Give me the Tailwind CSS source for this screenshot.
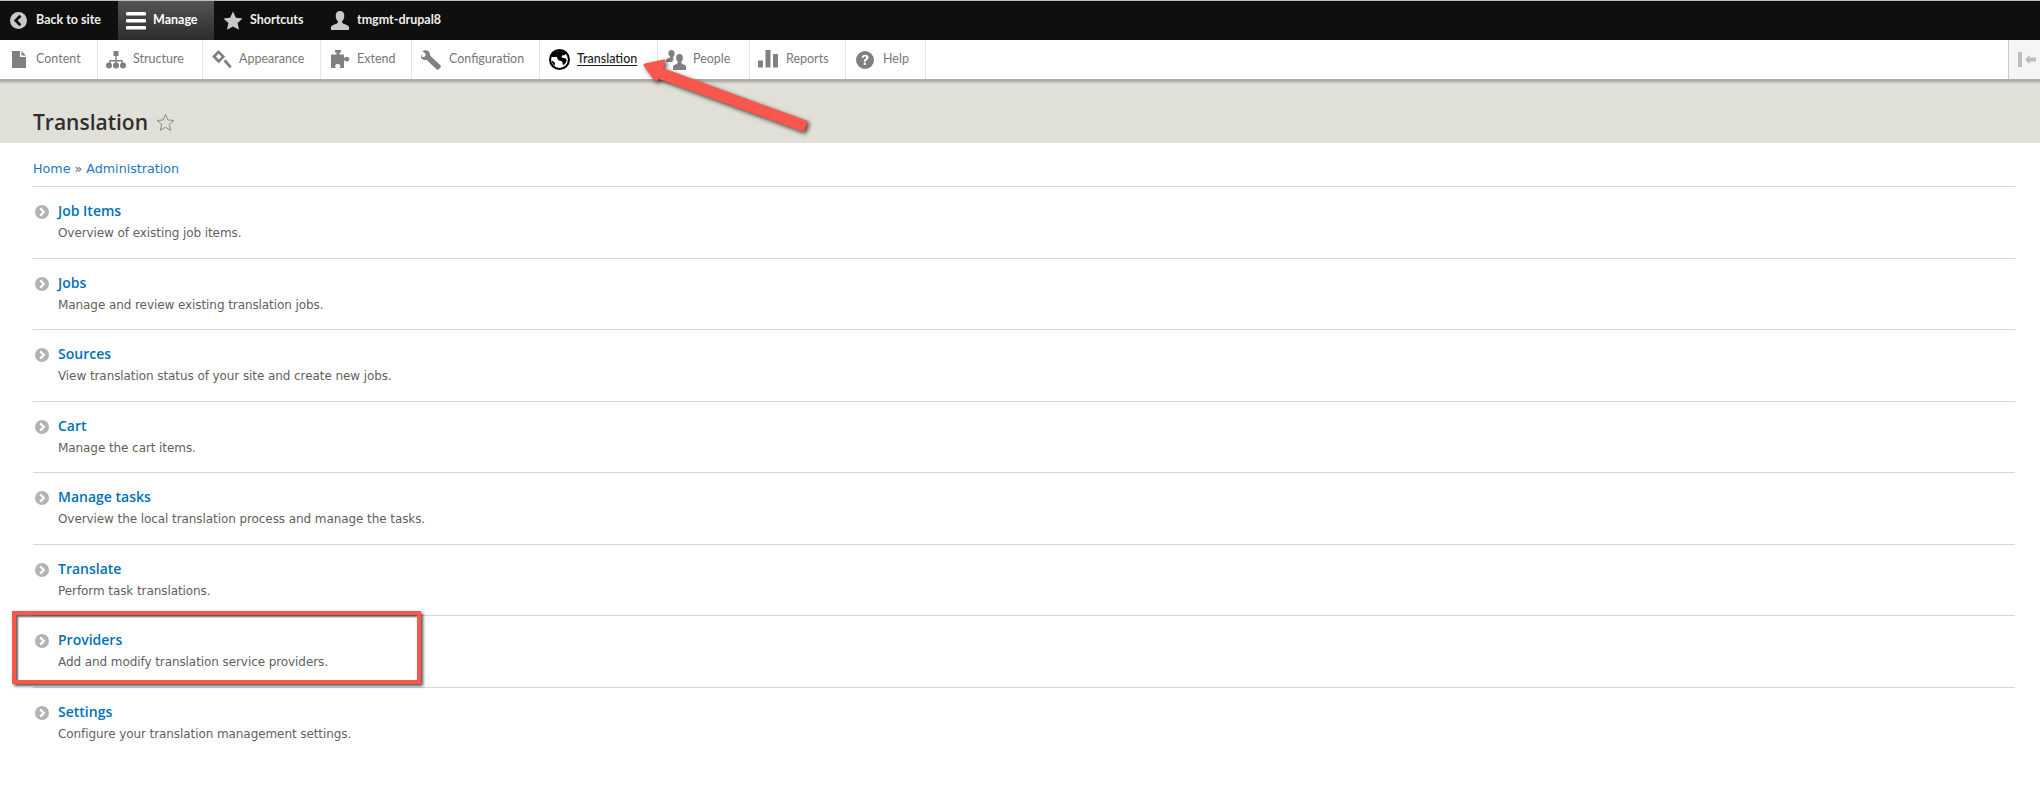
<!DOCTYPE html>
<html lang="en">
<head>
<meta charset="UTF-8">
<title>Translation</title>
<script src="https://cdn.jsdelivr.net/npm/@tailwindcss/browser@4"></script>
</head>
<body class="bg-white h-[786px] w-[2040px] overflow-hidden relative font-['DejaVu_Sans',sans-serif]">

<!-- Black bar -->
<div class="h-10 bg-[#0f0f0f] border-t border-[#bdbdbd] flex text-[12.5px] font-bold text-[#eeeeee] font-['Lato',sans-serif]">
    <a class="w-[118px] flex items-center pl-[10px] gap-[9px]">
        <svg class="w-[17px] h-[17px]" viewBox="0 0 16 16"><circle cx="8" cy="8" r="8" fill="#c9c9c9"/><path d="M9.8 3.6 5.4 8l4.4 4.4" fill="none" stroke="#0f0f0f" stroke-width="2.6"/></svg>
        Back to site
    </a>
    <a class="w-[96px] flex items-center pl-[8px] gap-[7px] bg-gradient-to-b from-[#555555] to-[#2c2c2c] text-white">
        <svg class="w-5 h-5" viewBox="0 0 20 20" fill="#ffffff"><rect y="1" width="20" height="3.6" rx="1"/><rect y="8" width="20" height="3.6" rx="1"/><rect y="15" width="20" height="3.6" rx="1"/></svg>
        Manage
    </a>
    <a class="w-[109px] flex items-center pl-[9px] gap-[7px]">
        <svg class="w-5 h-5" viewBox="0 0 20 20" fill="#c9c9c9"><path d="M10 .5l2.9 6.2 6.7.8-5 4.6 1.4 6.7-6-3.4-6 3.4 1.4-6.7-5-4.6 6.7-.8z"/></svg>
        Shortcuts
    </a>
    <a class="flex items-center pl-[7px] gap-[7px]">
        <svg class="w-5 h-5" viewBox="0 0 20 20" fill="#c9c9c9"><path d="M10 0c2.8 0 4.3 2 4.3 4.8 0 2.4-1 4.3-2.1 5.3-.4 1.4.2 2.4 1.9 3 2.300.8 4.500 1.400 4.900 3.100V19H1v-2.800c.4-1.700 2.600-2.300 4.900-3.100 1.700-.6 2.300-1.600 1.900-3C6.700 9.100 5.700 7.200 5.700 4.800 5.700 2 7.200 0 10 0z"/></svg>
        tmgmt-drupal8
    </a>
</div>

<!-- Tray -->
<nav class="h-[42px] bg-white border-b-[3px] border-[#aeaeaa] flex text-[12.5px] text-[#777777] font-['Lato',sans-serif]">
    <a class="w-[98px] flex items-center border-r border-[#e5e5e5] pl-[12px] gap-[10px]">
        <svg class="w-[14px] h-[17px]" viewBox="0 0 14 17" fill="#808080"><path d="M0 0h8v6h6v11H0zM9.500 0 14 4.500H9.500z"/></svg>
        Content
    </a>
    <a class="w-[105px] flex items-center border-r border-[#e5e5e5] pl-[8px] gap-[7px]">
        <svg class="w-5 h-5" viewBox="0 0 20 20" fill="#808080"><rect x="7.500" y="1" width="5" height="5"/><path d="M9.300 5h1.400v5h6v3h-1.400v-1.600h-4.600V13H9.300v-1.600H4.700V13H3.300v-3h6z"/><circle cx="3" cy="15.500" r="3"/><circle cx="10" cy="15.500" r="3"/><circle cx="17" cy="15.500" r="3"/></svg>
        Structure
    </a>
    <a class="w-[118px] flex items-center border-r border-[#e5e5e5] pl-[9px] gap-[7px]">
        <svg class="w-5 h-5" viewBox="0 0 20 20" fill="#808080"><path d="M0 6.500 6.500 0l6.700 6.700-6.500 6.500zM3.800 6.500l3 3 2.800-2.800-3-3z"/><path d="M11.500 11.500l2.200-2.200 6 7.200-1.800 1.800z"/></svg>
        Appearance
    </a>
    <a class="w-[91px] flex items-center border-r border-[#e5e5e5] pl-[9px] gap-[7px]">
        <svg class="w-5 h-5" viewBox="0 0 20 20" fill="#808080"><path d="M5 0h6v2.500H9.500V4.500H14v3.800c.6-1 2-1.500 3.300-1.300 1.500.3 2 1.300 2 2.200 0 1-.6 2-2 2.200-1.300.2-2.700-.3-3.300-1.300V18H9.500c.8-.8 1-1.800.6-2.700-.5-.9-1.400-1.300-2.400-1.300s-1.900.4-2.300 1.300c-.4.900-.2 1.900.6 2.700H1V4.500h5.500V2.500H5z"/></svg>
        Extend
    </a>
    <a class="w-[128px] flex items-center border-r border-[#e5e5e5] pl-[9px] gap-[8px]">
        <svg class="w-5 h-5" viewBox="0 0 20 20" fill="#808080"><path d="M5.200.3C3.800.1 2.500.4 1.300 1.100l3.500 2.800-.8 2.700-2.700.7L-.1 4c-.5 1.500-.3 3 .6 4.300 1.200 1.600 3.200 2.200 5 1.500l9.700 9.300c.8.800 2 .8 2.800 0l1.300-1.300c.8-.8.7-2-.1-2.800L9 5.600C9.400 3 7.800.7 5.200.3z"/></svg>
        Configuration
    </a>
    <a class="w-[118px] flex items-center border-r border-[#e5e5e5] pl-[9px] gap-[7px] text-[#1a1a1a] font-medium">
        <svg class="w-[21px] h-[21px]" viewBox="0 0 20 20"><circle cx="10" cy="10" r="9" fill="#ffffff" stroke="#000000" stroke-width="2"/><path d="M6 2c2 .4 4 0 6-.6 1.800.4 3.400 1.400 4.400 2.800-1 .6-1.400 2-2.800 1.800-1.200-.2-1.800.8-1.400 1.800.6 1 2.400.6 3.600 1.200 1 .6 1.200 2 .6 3.200-.6 1.400-1.600 2.800-3 3.200-.6-1-.2-2.400-1-3.400-.8-1-2.600-.6-3.600-1.600-1-1-.6-2.400-1.800-3C4.800 7.600 3 7.800 1.800 7.400 2.400 5 4 3 6 2z" fill="#000000"/><path d="M2.500 11c1.200.4 2.200 1.200 3 2.200.4 1-.2 2-.2 3C3.800 15 2.800 13 2.500 11z" fill="#000000"/></svg>
        <span class="underline underline-offset-2">Translation</span>
    </a>
    <a class="w-[92px] flex items-center border-r border-[#e5e5e5] pl-[8px] gap-[7px]">
        <svg class="w-5 h-5" viewBox="0 0 20 20" fill="#808080"><path d="M5.500 0C7.500 0 8.600 1.400 8.600 3.400c0 1.600-.7 3-1.500 3.700-.2 1 0 1.600.8 2.100-1 .6-1.500 1.600-1.600 2.800H0v-2c.3-1.200 1.900-1.600 3.400-2.200.6-.3.800-.8.600-1.600C3.100 5.500 2.400 4.900 2.400 3.400 2.400 1.400 3.500 0 5.500 0z"/><path d="M13.500 4c2.200 0 3.400 1.600 3.400 3.700 0 1.800-.8 3.300-1.600 4-.3 1 .1 1.700 1.200 2.200 1.500.6 3.100 1.100 3.500 2.400V20H7v-3.700c.4-1.300 2-1.800 3.500-2.400 1.100-.5 1.500-1.200 1.200-2.200-.8-.7-1.600-2.200-1.600-4C10.100 5.600 11.300 4 13.500 4z"/></svg>
        People
    </a>
    <a class="w-[96px] flex items-center border-r border-[#e5e5e5] pl-[8px] gap-[8px]">
        <svg class="w-5 h-5" viewBox="0 0 20 20" fill="#808080"><rect y="10.500" width="5" height="7"/><rect x="7.500" y="0" width="5" height="17.500"/><rect x="15" y="4" width="5" height="13.500"/></svg>
        Reports
    </a>
    <a class="w-[80px] flex items-center border-r border-[#e5e5e5] pl-[10px] gap-[9px]">
        <svg class="w-[18px] h-[18px]" viewBox="0 0 18 18"><circle cx="9" cy="9" r="9" fill="#808080"/><path d="M5.700 6.800C5.900 4.800 7.200 3.700 9.200 3.700c2 0 3.300 1.100 3.300 2.700 0 2.400-2.700 2.400-2.700 4.400H7.800c0-3 2.400-3 2.400-4.300 0-.7-.4-1.100-1.100-1.100-.8 0-1.200.5-1.300 1.400z" fill="#ffffff"/><rect x="7.700" y="11.700" width="2.200" height="2.300" fill="#ffffff"/></svg>
        Help
    </a>
    <div class="ml-auto w-[32px] bg-[#f5f5f5] border-l border-[#c9c9c9] flex items-center pl-[9px] gap-[3px]">
        <div class="w-1 h-[15px] bg-[#bdbdbd]"></div>
        <svg class="w-[11px] h-[9px]" viewBox="0 0 11 9" fill="#bdbdbd"><path d="M0 4.500 4.500 0v2.500H11v4H4.500V9z"/></svg>
    </div>
</nav>

<!-- Title -->
<header class="h-[61px] bg-[#e0e0d8] border-t-2 border-[#d2d2ca] pl-[33px] flex items-center gap-[8px] pt-[17px]">
    <h1 class="text-[21px] font-semibold leading-none text-[#2f2f2f] font-['Open_Sans',sans-serif]">Translation</h1>
    <svg class="w-[19px] h-[19px]" viewBox="0 0 20 20" fill="none" stroke="#85857d" stroke-width="1"><path d="M10 1.500l2.500 5.800 6.300.6-4.800 4.200 1.400 6.200-5.400-3.300-5.400 3.300 1.400-6.200L1.200 7.900l6.300-.6z"/></svg>
</header>

<main class="px-[33px] pr-[25px]">
    <div class="h-[43px] flex items-center text-[12.7px] text-[#666666] pt-[9px] font-['DejaVu_Sans',sans-serif]">
        <a class="text-[#1a76c2]">Home</a>
        <span class="mx-[4px]">»</span>
        <a class="text-[#1a76c2]">Administration</a>
    </div>
    <ul>
        <li class="h-[71.5px] border-t border-[#d4d4d4] flex pl-[2px] gap-[8px]">
            <svg class="w-[14px] h-[14px] mt-[18px] shrink-0" viewBox="0 0 14 14"><circle cx="7" cy="7" r="7" fill="#b3b3b3"/><path d="M5.200 3.400 8.800 7l-3.600 3.600" fill="none" stroke="#ffffff" stroke-width="2.200"/></svg>
            <div class="pl-[1px] pt-[13px]"><a class="block text-[14px] leading-[22px] font-semibold font-['Open_Sans',sans-serif] text-[#0071b8]">Job Items</a><p class="text-[12px] leading-[22px] tracking-[-.08px] text-[#5f5f5f]">Overview of existing job items.</p></div>
        </li>
        <li class="h-[71.5px] border-t border-[#d4d4d4] flex pl-[2px] gap-[8px]">
            <svg class="w-[14px] h-[14px] mt-[18px] shrink-0" viewBox="0 0 14 14"><circle cx="7" cy="7" r="7" fill="#b3b3b3"/><path d="M5.200 3.400 8.800 7l-3.600 3.600" fill="none" stroke="#ffffff" stroke-width="2.200"/></svg>
            <div class="pl-[1px] pt-[13px]"><a class="block text-[14px] leading-[22px] font-semibold font-['Open_Sans',sans-serif] text-[#0071b8]">Jobs</a><p class="text-[12px] leading-[22px] tracking-[-.08px] text-[#5f5f5f]">Manage and review existing translation jobs.</p></div>
        </li>
        <li class="h-[71.5px] border-t border-[#d4d4d4] flex pl-[2px] gap-[8px]">
            <svg class="w-[14px] h-[14px] mt-[18px] shrink-0" viewBox="0 0 14 14"><circle cx="7" cy="7" r="7" fill="#b3b3b3"/><path d="M5.200 3.400 8.800 7l-3.600 3.600" fill="none" stroke="#ffffff" stroke-width="2.200"/></svg>
            <div class="pl-[1px] pt-[13px]"><a class="block text-[14px] leading-[22px] font-semibold font-['Open_Sans',sans-serif] text-[#0071b8]">Sources</a><p class="text-[12px] leading-[22px] tracking-[-.08px] text-[#5f5f5f]">View translation status of your site and create new jobs.</p></div>
        </li>
        <li class="h-[71.5px] border-t border-[#d4d4d4] flex pl-[2px] gap-[8px]">
            <svg class="w-[14px] h-[14px] mt-[18px] shrink-0" viewBox="0 0 14 14"><circle cx="7" cy="7" r="7" fill="#b3b3b3"/><path d="M5.200 3.400 8.800 7l-3.600 3.600" fill="none" stroke="#ffffff" stroke-width="2.200"/></svg>
            <div class="pl-[1px] pt-[13px]"><a class="block text-[14px] leading-[22px] font-semibold font-['Open_Sans',sans-serif] text-[#0071b8]">Cart</a><p class="text-[12px] leading-[22px] tracking-[-.08px] text-[#5f5f5f]">Manage the cart items.</p></div>
        </li>
        <li class="h-[71.5px] border-t border-[#d4d4d4] flex pl-[2px] gap-[8px]">
            <svg class="w-[14px] h-[14px] mt-[18px] shrink-0" viewBox="0 0 14 14"><circle cx="7" cy="7" r="7" fill="#b3b3b3"/><path d="M5.200 3.400 8.800 7l-3.600 3.600" fill="none" stroke="#ffffff" stroke-width="2.200"/></svg>
            <div class="pl-[1px] pt-[13px]"><a class="block text-[14px] leading-[22px] font-semibold font-['Open_Sans',sans-serif] text-[#0071b8]">Manage tasks</a><p class="text-[12px] leading-[22px] tracking-[-.08px] text-[#5f5f5f]">Overview the local translation process and manage the tasks.</p></div>
        </li>
        <li class="h-[71.5px] border-t border-[#d4d4d4] flex pl-[2px] gap-[8px]">
            <svg class="w-[14px] h-[14px] mt-[18px] shrink-0" viewBox="0 0 14 14"><circle cx="7" cy="7" r="7" fill="#b3b3b3"/><path d="M5.200 3.400 8.800 7l-3.600 3.600" fill="none" stroke="#ffffff" stroke-width="2.200"/></svg>
            <div class="pl-[1px] pt-[13px]"><a class="block text-[14px] leading-[22px] font-semibold font-['Open_Sans',sans-serif] text-[#0071b8]">Translate</a><p class="text-[12px] leading-[22px] tracking-[-.08px] text-[#5f5f5f]">Perform task translations.</p></div>
        </li>
        <li class="h-[71.5px] border-t border-[#d4d4d4] flex pl-[2px] gap-[8px]">
            <svg class="w-[14px] h-[14px] mt-[18px] shrink-0" viewBox="0 0 14 14"><circle cx="7" cy="7" r="7" fill="#b3b3b3"/><path d="M5.200 3.400 8.800 7l-3.600 3.600" fill="none" stroke="#ffffff" stroke-width="2.200"/></svg>
            <div class="pl-[1px] pt-[13px]"><a class="block text-[14px] leading-[22px] font-semibold font-['Open_Sans',sans-serif] text-[#0071b8]">Providers</a><p class="text-[12px] leading-[22px] tracking-[-.08px] text-[#5f5f5f]">Add and modify translation service providers.</p></div>
        </li>
        <li class="h-[71.5px] border-t border-[#d4d4d4] flex pl-[2px] gap-[8px]">
            <svg class="w-[14px] h-[14px] mt-[18px] shrink-0" viewBox="0 0 14 14"><circle cx="7" cy="7" r="7" fill="#b3b3b3"/><path d="M5.200 3.400 8.800 7l-3.600 3.600" fill="none" stroke="#ffffff" stroke-width="2.200"/></svg>
            <div class="pl-[1px] pt-[13px]"><a class="block text-[14px] leading-[22px] font-semibold font-['Open_Sans',sans-serif] text-[#0071b8]">Settings</a><p class="text-[12px] leading-[22px] tracking-[-.08px] text-[#5f5f5f]">Configure your translation management settings.</p></div>
        </li>
    </ul>
</main>

<!-- Annotations drawn over the page -->
<div class="absolute left-[12px] top-[611px] w-[409px] h-[73px] border-4 border-[#f9574b] shadow-[2px_2px_3px_rgba(0,0,0,.7),inset_2px_2px_2px_rgba(0,0,0,.6)]"></div>
<svg class="absolute left-[630px] top-[50px] drop-shadow-[2px_2px_2px_rgba(0,0,0,.7)]" width="190" height="90" viewBox="630 50 190 90">
    <path d="M645 65 664 61 661 69 806 122 803 130 658 77 656 80z" fill="#f9574b" stroke="#f9574b" stroke-width="3" stroke-linejoin="round"/>
</svg>
</body>
</html>
